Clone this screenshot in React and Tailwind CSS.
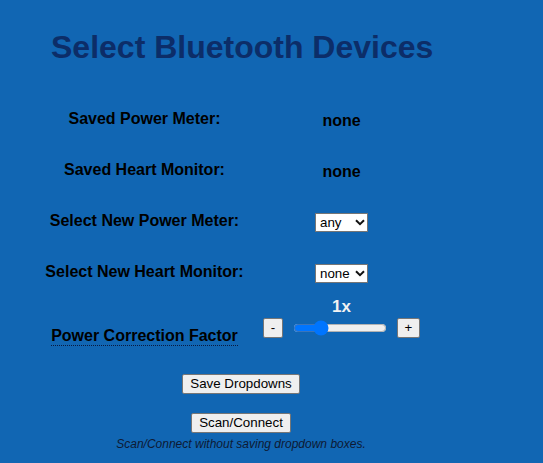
import React, { useState } from "react";

function Chevron() {
  return (
    <svg
      width="10"
      height="7"
      viewBox="0 0 10 7"
      className="pointer-events-none absolute right-[3px] top-[6px]"
    >
      <path d="M1 1.3 L5 5.2 L9 1.3" fill="none" stroke="#111" strokeWidth="2" />
    </svg>
  );
}

function Select({ value }) {
  return (
    <div className="relative inline-flex">
      <select
        defaultValue={value}
        className="appearance-none w-[53px] h-[19px] bg-white border border-[#767676] text-[13.33px] leading-[17px] text-black pl-[4px] pr-[14px]"
      >
        <option value="any">any</option>
        <option value="none">none</option>
      </select>
      <Chevron />
    </div>
  );
}

export default function App() {
  const [factor, setFactor] = useState(26);
  return (
    <div
      className="min-h-screen w-full bg-[#1166b3] text-black"
      style={{ fontFamily: '"Liberation Sans", Arial, sans-serif' }}
    >
      <div className="pt-[29px]">
        <h1 className="ml-[51px] text-[32px] leading-[37px] font-bold text-[#0c2d68]">
          Select Bluetooth Devices
        </h1>
      </div>
      <div className="ml-[40px] w-[402px] mt-[27px] flex flex-col">
        <div className="grid grid-cols-[209px_185px]">
          <div className="h-[51px] flex items-center justify-center text-[16px] leading-[18px] font-bold">
            Saved Power Meter:
          </div>
          <div className="h-[51px] flex items-center justify-center pt-[4px] text-[16px] leading-[18px] font-bold">
            none
          </div>
          <div className="h-[51px] flex items-center justify-center text-[16px] leading-[18px] font-bold">
            Saved Heart Monitor:
          </div>
          <div className="h-[51px] flex items-center justify-center pt-[4px] text-[16px] leading-[18px] font-bold">
            none
          </div>
          <div className="h-[51px] flex items-center justify-center text-[16px] leading-[18px] font-bold">
            Select New Power Meter:
          </div>
          <div className="h-[51px] flex items-center justify-center pt-[4px]">
            <Select value="any" />
          </div>
          <div className="h-[51px] flex items-center justify-center text-[16px] leading-[18px] font-bold">
            Select New Heart Monitor:
          </div>
          <div className="h-[51px] flex items-center justify-center pt-[4px]">
            <Select value="none" />
          </div>
          <div className="flex justify-center pt-[30px]">
            <abbr
              title="Adjust the power reading"
              className="text-[16px] leading-[18px] font-bold no-underline border-b border-dotted border-[#0a1a40]"
            >
              Power Correction Factor
            </abbr>
          </div>
          <div className="flex flex-col items-center">
            <div className="text-[17px] leading-[20px] font-bold text-[#f2f2f2]">
              1x
            </div>
            <div className="mt-[1px] flex items-center gap-[10px]">
              <button className="w-[20px] h-[20px] bg-[#efefef] border border-[#767676] rounded-[2px] text-[13.33px] leading-none text-black">
                -
              </button>
              <input
                type="range"
                min="0"
                max="100"
                value={factor}
                onChange={(e) => setFactor(Number(e.target.value))}
                className="w-[94px] m-0 accent-[#0075ff]"
              />
              <button className="w-[23px] h-[20px] bg-[#efefef] border border-[#767676] rounded-[2px] text-[13.33px] leading-none text-black">
                +
              </button>
            </div>
          </div>
        </div>
        <div className="flex flex-col items-center mt-[28px]">
          <button className="h-[20px] px-[7px] bg-[#efefef] border border-[#767676] rounded-[2px] text-[13.33px] leading-[16px] text-black">
            Save Dropdowns
          </button>
          <button className="mt-[19px] h-[20px] px-[7px] bg-[#efefef] border border-[#767676] rounded-[2px] text-[13.33px] leading-[16px] text-black">
            Scan/Connect
          </button>
          <p className="mt-[4px] text-[12px] leading-[14px] italic text-[#0d1a33]">
            Scan/Connect without saving dropdown boxes.
          </p>
        </div>
      </div>
    </div>
  );
}
